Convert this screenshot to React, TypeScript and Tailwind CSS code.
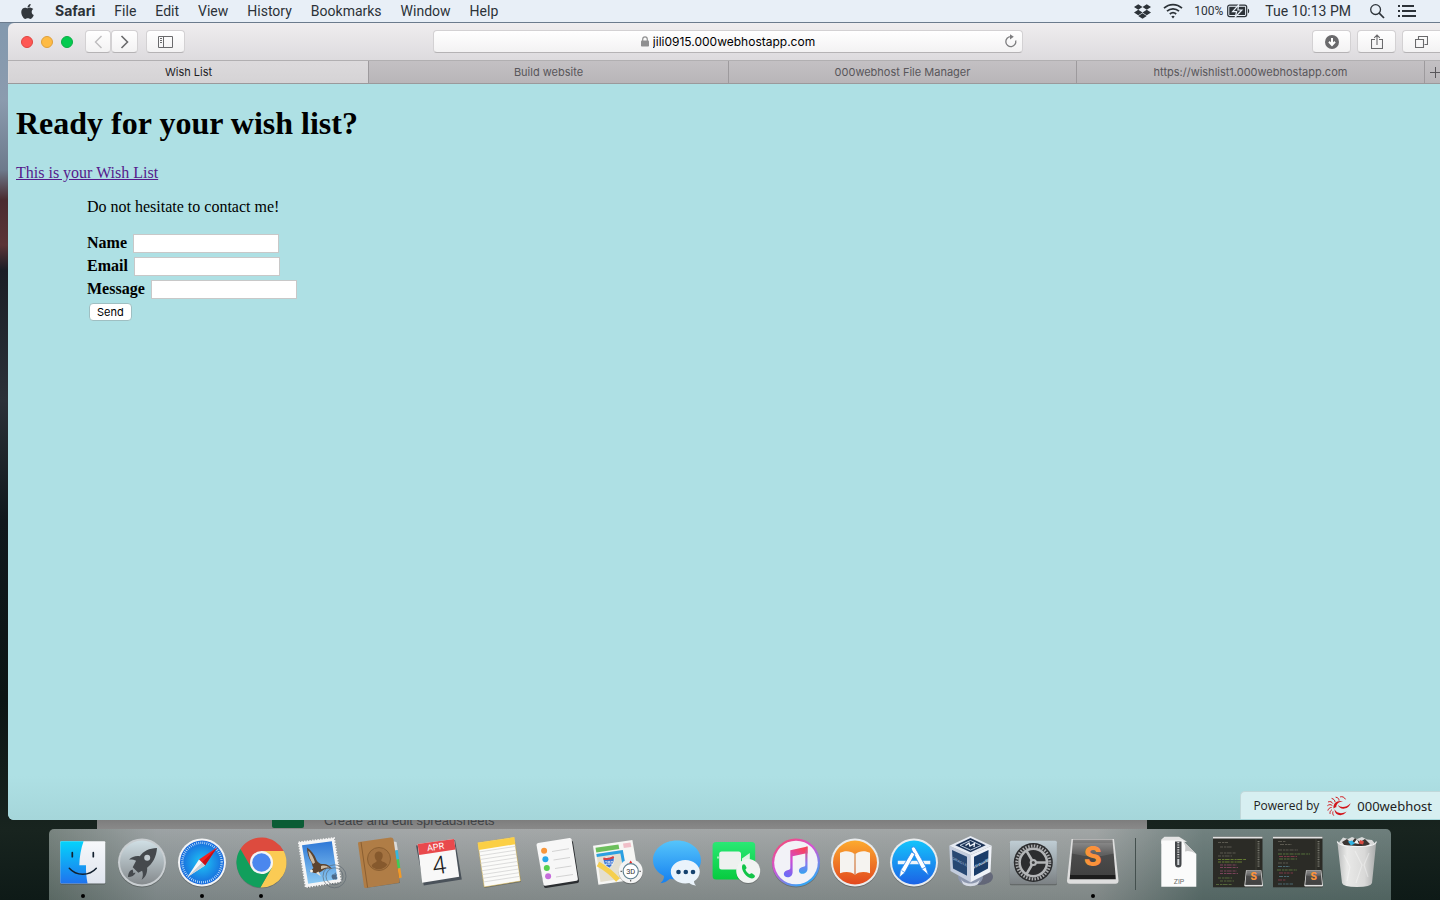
import type { ReactNode } from 'react';
import { FaApple, FaDropbox } from 'react-icons/fa';

const menus = ['File', 'Edit', 'View', 'History', 'Bookmarks', 'Window', 'Help'];

function MenuBar() {
  return (
    <header className="flex h-[23px] shrink-0 items-center justify-between border-b border-[#6b7b8d] bg-[#e8eff7] pr-[23px] pl-[19px] font-['Roboto',sans-serif] text-[14px] leading-[22px] text-[#2c3238]">
      <nav aria-label="Menu bar" className="flex items-center gap-[19px]">
        <button aria-label="Apple menu" className="text-[#33383d]">
          <FaApple size={17} />
        </button>
        <button className="font-['Inter',sans-serif] font-bold">Safari</button>
        {menus.map((m) => (
          <button key={m}>{m}</button>
        ))}
      </nav>
      <div className="flex items-center">
        <button aria-label="Dropbox"><FaDropbox size={17} /></button>
        <button aria-label="Wi-Fi" className="ml-3">
          <svg width="20" height="16" viewBox="0 0 20 16" fill="none" stroke="currentColor" strokeWidth="1.7">
            <path d="M1 5.2a13 13 0 0 1 18 0M4 8.2a8.8 8.8 0 0 1 12 0M6.8 11a4.8 4.8 0 0 1 6.4 0" />
            <path d="M10 15.4 8.3 13.5a2.4 2.4 0 0 1 3.4 0z" fill="currentColor" stroke="none" />
          </svg>
        </button>
        <button className="ml-[11px] flex items-center gap-1 text-[12px]">
          100%
          <svg width="23" height="14" viewBox="0 0 23 14" aria-hidden="true">
            <rect x=".7" y="1.2" width="19" height="11.4" rx="2" fill="none" stroke="currentColor" strokeWidth="1.2" />
            <rect x="2.3" y="2.8" width="15.8" height="8.2" fill="currentColor" />
            <path d="M21 4.7c1.6.5 1.6 4 0 4.500z" fill="currentColor" />
            <path d="M11.6 1 5.6 7.7h4L8.3 13l6.6-7h-4z" fill="currentColor" stroke="#e8eff7" strokeWidth="1.2" />
          </svg>
        </button>
        <button className="ml-[15px]">Tue 10:13 PM</button>
        <button aria-label="Spotlight" className="ml-[18px]">
          <svg width="16" height="16" viewBox="0 0 16 16" fill="none" stroke="currentColor" strokeWidth="1.3">
            <circle cx="6.6" cy="6.6" r="4.9" />
            <path d="m10.2 10.2 4.8 4.8" strokeWidth="1.7" />
          </svg>
        </button>
        <button aria-label="Notification Center" className="ml-[13px]">
          <svg width="19" height="12" viewBox="0 0 19 12" fill="currentColor">
            <path d="M0 0h2v2H0zM4 0h12v2H4zM0 5h2v2H0zM4 5h14v2H4zM0 10h2v2H0zM4 10h14v2H4z" />
          </svg>
        </button>
      </div>
    </header>
  );
}

function ToolButton({ label, children, className = '' }: { label: string; children: ReactNode; className?: string }) {
  return (
    <button
      aria-label={label}
      className={
        'flex h-[23px] shrink-0 items-center justify-center rounded-[4px] border border-b-[#b5b3b5] border-[#d3d1d3] bg-linear-to-b from-white to-[#f3f2f3] text-[#6a6a6c] ' +
        className
      }
    >
      {children}
    </button>
  );
}

function Toolbar() {
  return (
    <div className="grid h-[38px] grid-cols-[425fr_590fr_417fr] items-center border-b border-[#b1afb1] bg-linear-to-b from-[#efedef] to-[#dddbde] font-['Inter',sans-serif]">
      <div className="flex items-center pl-[13px]">
        <div className="flex gap-2">
          <button aria-label="Close" className="size-3 rounded-full border border-[#e0443f] bg-[#fe5754]" />
          <button aria-label="Minimize" className="size-3 rounded-full border border-[#dfa03a] bg-[#febb45]" />
          <button aria-label="Zoom" className="size-3 rounded-full border border-[#0bad45] bg-[#04cb50]" />
        </div>
        <ToolButton label="Back" className="ml-3 w-[26px]">
          <svg width="9" height="14" viewBox="0 0 9 14" fill="none" stroke="#bdbcbe" strokeWidth="1.4"><path d="M7.500 1 1.500 7l6 6" /></svg>
        </ToolButton>
        <ToolButton label="Forward" className="w-[27px]">
          <svg width="9" height="14" viewBox="0 0 9 14" fill="none" stroke="currentColor" strokeWidth="1.6"><path d="m1.500 1 6 6-6 6" /></svg>
        </ToolButton>
        <ToolButton label="Show sidebar" className="ml-2 w-[39px]">
          <svg width="15" height="12" viewBox="0 0 15 12" fill="none" stroke="currentColor"><path d="M.5.5h14v11H.5zM5.500 .5v11M2 2.500h2M2 4.500h2M2 6.500h2" /></svg>
        </ToolButton>
      </div>
      <div className="relative flex h-[23px] items-center justify-center gap-1 rounded-[4px] border border-[#d3d1d3] border-b-[#b5b3b5] bg-linear-to-b from-white to-[#f3f2f3]">
        <svg width="8" height="11" viewBox="0 0 8 11" aria-hidden="true">
          <rect y="4.500" width="8" height="6" rx=".8" fill="#8f8f90" />
          <path d="M1.700 5V3.200a2.300 2.300 0 0 1 4.600 0V5" fill="none" stroke="#8f8f90" strokeWidth="1.200" />
        </svg>
        <input
          aria-label="Address"
          defaultValue="jili0915.000webhostapp.com"
          className="[field-sizing:content] bg-transparent pt-px text-[12px] leading-[18px] text-black outline-none"
        />
        <button aria-label="Reload" className="absolute right-1 text-[#7c7c7e]">
          <svg width="14" height="15" viewBox="0 0 14 15" fill="none" stroke="currentColor" strokeWidth="1.300">
            <path d="M11.700 6.500a5 5 0 1 1-4.900-3.900" />
            <path d="M6 .2 9.800 2.700 6 5.400z" fill="currentColor" stroke="none" />
          </svg>
        </button>
      </div>
      <div className="flex justify-end gap-[6px] overflow-hidden">
        <ToolButton label="Downloads" className="w-[39px]">
          <svg width="14" height="14" viewBox="0 0 14 14"><circle cx="7" cy="7" r="7" fill="currentColor" /><path d="M7 3v6M4 6.800l3 3.200 3-3.200" fill="none" stroke="#fff" strokeWidth="2" /></svg>
        </ToolButton>
        <ToolButton label="Share" className="w-[39px]">
          <svg width="12" height="16" viewBox="0 0 12 16" fill="none" stroke="currentColor"><path d="M4 5.500H.5v9h11v-9H8M6 11V1.200M3.200 3.800 6 1l2.800 2.800" strokeWidth="1.100" /></svg>
        </ToolButton>
        <ToolButton label="Show all tabs" className="w-[38px] rounded-r-none border-r-0">
          <svg width="13" height="12" viewBox="0 0 13 12" fill="none" stroke="currentColor"><path d="M.5 3.500h8v8h-8zM3.500 3V.5h9v8H9.500" strokeWidth="1.100" /></svg>
        </ToolButton>
      </div>
    </div>
  );
}

function Tabs() {
  const idle = 'border-l border-[#9d9a9d] bg-linear-to-b from-[#c3c0c3] to-[#b8b5b8] text-[#58565a]';
  return (
    <div className="flex h-[23px] border-b border-[#9b999b] font-['Inter',sans-serif] text-[11px] leading-[22px]">
      <button className="flex-[30] border-l border-[#dcdadc] bg-linear-to-b from-[#dcdadc] to-[#d5d3d5] text-[#1d1d1f]">Wish List</button>
      <button className={'flex-[30] ' + idle}>Build website</button>
      <button className={'flex-[29] ' + idle}>000webhost File Manager</button>
      <button className={'flex-[29] ' + idle}>https://wishlist1.000webhostapp.com</button>
      <button aria-label="New tab" className={'flex w-4 items-center justify-end overflow-hidden ' + idle}>
        <svg width="10" height="11" viewBox="0 0 10 11" stroke="currentColor" className="shrink-0"><path d="M0 5.500h10M5.500 0v11" /></svg>
      </button>
    </div>
  );
}

function Field({ id, label }: { id: string; label: string }) {
  return (
    <div className="flex h-[23px] items-end gap-[6px] pb-px">
      <label htmlFor={id} className="leading-[21px] font-bold">{label}</label>
      <input id={id} name={id} className="h-[19px] w-[146px] border border-[#c8c8c8] bg-white px-1 text-[11px]" />
    </div>
  );
}

function Page() {
  return (
    <main className="relative flex-1 bg-[#aee0e4] bg-linear-to-b from-transparent from-94% to-[#a5d6da] px-2 pt-[21px] font-['Liberation_Serif',serif] text-[16px] leading-[18px] text-black">
      <h1 className="text-[32px] leading-[37px] font-bold">Ready for your wish list?</h1>
      <a href="#wishlist" className="mt-[22px] inline-block text-[#551a8b] underline">This is your Wish List</a>
      <form className="pl-[71px]" onSubmit={(e) => e.preventDefault()}>
        <p className="mt-[16px] mb-[15px]">Do not hesitate to contact me!</p>
        <Field id="name" label="Name" />
        <Field id="email" label="Email" />
        <Field id="message" label="Message" />
        <button className="mt-[3px] ml-[2px] h-[18px] rounded-[4px] border border-[#9fbfc2] bg-white px-[7px] font-['Inter',sans-serif] text-[11px] leading-[15px]">
          Send
        </button>
      </form>
      <a
        href="#host"
        className="absolute right-0 bottom-px flex h-[28px] items-center rounded-tl-[5px] border-t border-l border-[#c0d8da] bg-[#d7eff1] pr-2 pl-3 font-['Open_Sans',sans-serif] text-[12px] text-[#222]"
      >
        Powered by
        <svg width="24" height="20" viewBox="0 0 24 20" fill="#d2161b" className="mr-[6px] ml-2" aria-hidden="true">
          <path d="M6.500 12.500C6 7.500 9.500 4.200 16 5.300 11.500 5.800 9.300 8 9.300 11.300c-.6 0-1.700.4-2.800 1.200z" />
          <path d="M10.800 8.800c3 3.400 8.200 3 12.700-1.600-1.500 6-10.500 7.800-12.700 1.600z" />
          <path d="M7.600 13.300c2 4.200 7 5 12 2.300-3.800 5.700-12.200 4.200-12-2.300z" />
          <g fill="none" stroke="#d2161b" strokeWidth="1" strokeLinecap="round">
            <path d="M13.500.8c1.800-.5 3.800.2 4.800 2.200M9 1.200c2.200.4 3 1.600 3 3M5 2.500c2 .6 2.800 1.700 3 3.300M1.500 5.800c2-.6 3.300 0 4.200 1.500M.7 9.500c1.500-1.200 3-1.200 4.300-.2M1 14.200c.5-1.700 1.700-2.600 3.200-2.700M3 17.500c-.2-1.500.3-2.600 1.500-3.500M6.500 19.300c-.8-1-1-2.200-.6-3.500" />
          </g>
        </svg>
        <span className="font-['Noto_Sans',sans-serif] text-[13px]">000webhost</span>
      </a>
    </main>
  );
}

function Disc({ fill, rim = '#e9ecee' }: { fill: string; rim?: string }) {
  return (
    <>
      <circle cx="30" cy="30.500" r="24" fill="#000" opacity=".22" />
      <circle cx="30" cy="29.500" r="24" fill={rim} />
      <circle cx="30" cy="29.500" r="22" fill={fill} />
    </>
  );
}

const finder = (
  <>
    <defs>
      <linearGradient id="fb" x2="0" y2="1"><stop stopColor="#05d3fb" /><stop offset="1" stopColor="#1f73ee" /></linearGradient>
      <linearGradient id="fw" x2="0" y2="1"><stop stopColor="#f6f8fb" /><stop offset="1" stopColor="#dfe4ee" /></linearGradient>
    </defs>
    <rect x="7.300" y="9" width="45" height="42.500" rx="1" fill="#000" opacity=".25" />
    <rect x="7.300" y="8.300" width="45" height="42.200" rx="1" fill="url(#fw)" />
    <path d="M8.300 8.300H30.600C28 15 26.500 24 26.300 32.300h6.700c-.2 6 .4 12.500 1.600 18.200H8.300a1 1 0 0 1-1-1V9.300a1 1 0 0 1 1-1z" fill="url(#fb)" />
    <path d="M19.300 19.700v4M40.300 19.700v4" stroke="#12202f" strokeWidth="1.700" strokeLinecap="round" />
    <path d="M16.300 35.300c7 8 20 8 27 0" fill="none" stroke="#12202f" strokeWidth="1.500" strokeLinecap="round" />
  </>
);

const launchpad = (
  <>
    <defs><linearGradient id="lp" x2="0" y2="1"><stop stopColor="#d0dfe5" /><stop offset="1" stopColor="#858a8d" /></linearGradient></defs>
    <Disc fill="url(#lp)" rim="#c9ced1" />
    <path d="M45 15c-8 .3-13.500 3-17.200 8.300-4-.7-8 .6-10.700 3.300 2.200-.2 4.800 0 7 1.200l-3.400 6.400 5.600 5.600 3.800-2c1.200 3 1 6-.5 9 4-2.600 6-7 5.500-12C40.500 30.500 44.500 24 45 15z" fill="#45494d" />
    <circle cx="35.200" cy="24.700" r="3" fill="#c3ccd1" />
    <path d="M20.500 36.500c-3 .8-4.300 4-4.500 7.500 3 .2 6.500-1.400 7.600-4.300-.8 0-1.600 0-2.400.6.200-1.200 0-2.600-.7-3.800z" fill="#45494d" />
  </>
);

const safari = (
  <>
    <defs><radialGradient id="sf"><stop stopColor="#1fc8f6" /><stop offset="1" stopColor="#1768dc" /></radialGradient></defs>
    <Disc fill="url(#sf)" rim="#f3f4f5" />
    <circle cx="30" cy="29.500" r="19.700" fill="none" stroke="#d6efff" strokeWidth="2.400" strokeDasharray=".7 1.360" />
    <path d="M45 14.500 33 32.500 27 26.500z" fill="#f01f1f" />
    <path d="M45 14.500 33 32.500 30 29.500z" fill="#c51018" />
    <path d="M15.500 44 27 26.500 33 32.500z" fill="#f7f7f7" />
    <path d="M15.500 44 30 29.500 33 32.500z" fill="#cbd0d6" />
  </>
);

const chrome = (
  <>
    <circle cx="30.500" cy="30.300" r="25" fill="#000" opacity=".2" />
    <g transform="translate(.5)">
      <path d="M30 18H52.200A25 25 0 0 0 8.900 16L20 35.250z" fill="#dd4b3e" />
      <path d="M30 18H52.200A25 25 0 0 1 28.900 54.500L40 35.250z" fill="#fbcb54" />
      <path d="M40 35.250 28.900 54.500A25 25 0 0 1 8.900 16L20 35.250z" fill="#119f5c" />
      <circle cx="30" cy="29.500" r="11.500" fill="#f5f5f5" />
      <circle cx="30" cy="29.500" r="9.300" fill="#4b87ee" />
    </g>
  </>
);

const mail = (
  <>
    <defs><linearGradient id="ml" x2="0" y2="1"><stop stopColor="#2f78d6" /><stop offset="1" stopColor="#8ccaf3" /></linearGradient></defs>
    <path d="M9.500 10.500 44.500 6l7 43.500L16 55z" fill="#000" opacity=".25" />
    <path d="M8.700 9.300 44 5l7 43.700-35.300 5.600z" fill="#f5f5f5" stroke="#f5f5f5" strokeWidth="1.800" strokeDasharray="1.400 1.300" />
    <path d="M12 12.200 41.800 8.300l5.700 37.900-29.300 4.500z" fill="url(#ml)" />
    <path d="M17 14.500c4 2.500 7.500 7 9.500 12.500 1.500 2.500 3 3.800 5.500 4 4-.5 7.500.8 10 5-3.500-.8-6-.5-8.500 1-3 2.500-6 3.500-9 3l-5-1.500 4-3.500c-1-1.500-1.500-3.500-1.800-5.500-3-4-4.700-9.500-4.700-15z" fill="#5c432e" />
    <path d="M18.300 17.500c3 3 5.700 7.500 6.700 12l-2 1.500c-2.700-4-4.300-8.500-4.700-13.500zM31 33c3.500-1 6-.3 8.500 2-3.500-.8-5.500 0-8.500 1.200z" fill="#cdbba3" />
    <path d="m26 40 5 3.500-2.500-5z" fill="#e9e0d2" />
    <circle cx="21.500" cy="38" r="1.500" fill="#f4efe6" />
    <g fill="none" stroke="#5e6870" strokeWidth=".9" opacity=".7"><circle cx="44.500" cy="43.300" r="11.500" /><circle cx="44.500" cy="43.300" r="8.500" /></g>
    <FaApple x="40.500" y="39" size="8" color="#4d6b8a" />
  </>
);

const contacts = (
  <>
    <path d="M41 8l5.500 1 1.300 8-4 1z" fill="#dadada" />
    <path d="M43 18l4.700-1 1.400 9-4 1z" fill="#35b8dd" />
    <path d="M45 27l4-1 1.300 9-4 1z" fill="#40cc54" />
    <path d="M46 36l4.300-1 1.500 9.500-3.800 1z" fill="#f29a28" />
    <path d="M9 10.500 42 6l8 44-34.500 5z" fill="#000" opacity=".25" />
    <path d="M8 10.500q-.2-1.200 1-1.400L40.500 4.500q2.500-.2 3 2l6 41.500q.2 1.800-1.500 2L15.500 55q-1.200 0-1.500-1.200z" fill="#b07d46" />
    <path d="m11 9 6.600 45.500" stroke="#8b5f31" strokeWidth="1" />
    <circle cx="29" cy="26" r="11.500" fill="#a47341" stroke="#8b5f31" />
    <path d="M29 18.500c2.800 0 4 2.200 3.700 4.800-.2 1.800-1 3-1.500 3.700 0 2 5 2 6 4.800a10 10 0 0 1-15.500 1.500c.5-3.500 5-3 5-5.700-1-.8-1.800-2.300-2-4.200-.2-2.700 1.300-4.900 4.300-4.900z" fill="#86592d" />
  </>
);

const calendar = (
  <>
    <path d="M7 12.500 46 7l6.800 39.500-38 6z" fill="#4a525a" />
    <path d="M8.600 11 45 6l5.200 37.700-37 6z" fill="#f8f8f8" />
    <path d="M8.600 11 45 6l1.500 10.500L10.200 22z" fill="#e9494c" />
    <g transform="rotate(-8 28 28)" textAnchor="middle" fontFamily="Roboto, sans-serif">
      <text x="28.500" y="17" fontSize="9" fill="#fff">APR</text>
      <text x="29.500" y="41" fontSize="25" fontWeight="300" fill="#1d1d1d">4</text>
    </g>
  </>
);

const notes = (
  <>
    <path d="M10 11 45.500 5.500l6.500 43.500L15.500 55z" fill="#000" opacity=".25" />
    <path d="M8.800 9.700 45.200 4.300 51.500 48l-36.300 6z" fill="#fbfbf9" stroke="#d8b13c" strokeWidth=".5" />
    <path d="M8.800 9.700 45.200 4.300l1 7-36.400 5.600z" fill="#fbcf45" />
    <path d="m10 19 36.500-5.600m-36 9.400L47 17.200m-36 9.300L47.500 21M11.500 30.300 48 24.700M12 34l36.500-5.500M12.600 37.800 49 32.300m-35.800 9.300L49.600 36m-35.800 9.300 36.300-5.600m-35.800 9.300 36.200-5.600" stroke="#cfcfcf" strokeWidth=".7" />
  </>
);

const reminders = (
  <>
    <path d="M9.500 13 43 7.500q1.500 0 2 1.500l6 39q.2 1.500-1.300 1.900L18 55q-1.700 0-2-1.500z" fill="#2b2e31" />
    <path d="M8.500 12q-.2-1.800 1.600-2.100L41.500 5q1.800-.2 2.100 1.600l6.300 39.300q.2 1.500-1.400 1.900L17.500 52.800q-1.700.2-2.100-1.500z" fill="#f7f7f7" />
    <circle cx="16.100" cy="17.700" r="3" fill="#f8963a" />
    <circle cx="17.400" cy="26.300" r="3" fill="#27a7ea" />
    <circle cx="18.800" cy="35" r="3" fill="#55d050" />
    <circle cx="20.100" cy="43.300" r="3" fill="#c66ddb" />
    <path d="m24 18.500 17-2.800M25.500 27 42 24.500m-15 11L43.500 33M28 44l17-2.500" stroke="#c9c9c9" strokeWidth=".8" />
  </>
);

const maps = (
  <>
    <path d="M6 12.700 45.400 7l6.600 39-40.600 5.700z" fill="#f6f6f4" />
    <path d="m8.500 14.800 23-3.300.8 4.500-23 3.500z" fill="#6cbf5c" />
    <path d="m36 10.500 7.500-1 .8 4.500-7.500 1z" fill="#f0bfc8" />
    <path d="m9.500 21 26-4 2 15 10 2 1 9.500-35 5.500z" fill="#e4dfd0" />
    <path d="m9.600 22.500 25-3.800 4.400 24" fill="none" stroke="#2ba0e2" strokeWidth="3" />
    <path d="M11 31c5 3 10 5 20 16" fill="none" stroke="#f6cf4f" strokeWidth="5" />
    <path d="M16.500 24.500q5 1.500 10-1.500 2.500 6-4 12-7.500-3.500-6-10.500z" fill="#3a72cf" stroke="#fff" strokeWidth=".6" />
    <path d="M16.300 25.500q5 1.500 10.500-1.500" fill="none" stroke="#da4144" strokeWidth="2" />
    <text x="22" y="32" fontSize="5" fill="#fff" textAnchor="middle" fontFamily="Roboto, sans-serif">280</text>
    <circle cx="43.700" cy="39.300" r="12" fill="#000" opacity=".25" />
    <circle cx="43.700" cy="38.300" r="12" fill="#f4f4f4" />
    <circle cx="43.700" cy="38.300" r="7.600" fill="#fff" stroke="#5f8090" strokeWidth="1.200" />
    <path d="m43.700 27.500 1.500 2.600h-3z" fill="#e42a2a" />
    <path d="M33.500 38.300h1.500M52.400 38.300h1.500M43.700 47v1.500" stroke="#444" />
    <text x="43.700" y="41" fontSize="7.500" fill="#333" textAnchor="middle" fontFamily="Roboto, sans-serif">3D</text>
  </>
);

const messages = (
  <>
    <defs><linearGradient id="ms" x2="0" y2="1"><stop stopColor="#56c5fb" /><stop offset="1" stopColor="#1580f0" /></linearGradient></defs>
    <path d="M30 7.500c13.300 0 24 8.700 24 19.500S43.300 46.500 30 46.500q-3.500 0-7-.8-4.500 4-9.500 4.500 3.500-3 3.500-7.200C10 39.500 6 33.800 6 27 6 16.200 16.700 7.500 30 7.500z" fill="url(#ms)" />
    <path d="M38.300 27c8 0 14.500 5.200 14.500 11.700 0 4-2.300 7.300-5.800 9.500 0 2 .8 3.200 2.300 4.300-3 0-5.300-1-7-2.400q-2 .4-4 .4c-8 0-14.500-5.300-14.500-11.800S30.300 27 38.300 27z" fill="#eaf3fb" />
    <g fill="#15426f"><circle cx="31.500" cy="39" r="2.300" /><circle cx="38.800" cy="39" r="2.300" /><circle cx="46" cy="39" r="2.300" /></g>
  </>
);

const facetime = (
  <>
    <defs><linearGradient id="ft" x2="0" y2="1"><stop stopColor="#2ae874" /><stop offset="1" stopColor="#07cb3f" /></linearGradient></defs>
    <rect x="6.600" y="9" width="42.600" height="37.500" rx="3.500" fill="url(#ft)" />
    <rect x="13.200" y="18.500" width="21.800" height="18" rx="2.500" fill="#eef1ef" />
    <path d="m36 25.500 7.800-5.500v14L36 29.500z" fill="#dff3e4" />
    <path d="M12 23.500v2" stroke="#fff" strokeWidth="1.200" />
    <circle cx="42.200" cy="39" r="12" fill="#000" opacity=".2" />
    <circle cx="42.200" cy="38" r="12" fill="#f1f4f2" />
    <path d="M36.500 31.800c1.200-1 2-.8 2.700.3l1.200 2.200c.5 1-.3 1.700-1 2.300.7 2 2.400 3.900 4.400 4.700.8-.7 1.600-1.300 2.500-.7l2 1.500c1 .8.8 1.800-.2 2.600-4.700 3.500-14.500-7-11.600-12.900z" fill="#12c548" />
  </>
);

const itunes = (
  <>
    <defs>
      <linearGradient id="it" x2=".6" y2="1"><stop stopColor="#fb4a60" /><stop offset=".5" stopColor="#d554d6" /><stop offset="1" stopColor="#35a6f5" /></linearGradient>
      <linearGradient id="nt" x1=".7" x2=".2" y2="1"><stop stopColor="#fb4158" /><stop offset=".5" stopColor="#d04ad2" /><stop offset="1" stopColor="#6a6bf7" /></linearGradient>
      <linearGradient id="ns" x2="0" y2="1"><stop stopColor="#fb4158" /><stop offset=".6" stopColor="#8a78f0" /><stop offset="1" stopColor="#36a3f0" /></linearGradient>
    </defs>
    <circle cx="30" cy="30.500" r="24" fill="#000" opacity=".2" />
    <circle cx="30" cy="29.500" r="24" fill="url(#it)" />
    <circle cx="30" cy="29.500" r="21.800" fill="#f2f2f7" />
    <path d="M24.300 17.200 41.500 13.500V20.500H39.300l-12.700 2.700v16c0 3-2.300 5-5 5-2.200 0-3.800-1.200-3.800-3.200 0-2.500 2.300-3.600 4.400-4 1.400-.2 2.100-.6 2.100-1.900z" fill="url(#nt)" />
    <path d="M41.500 13.500V36c0 3-2.500 4.800-5 4.800-2 0-3.600-1.200-3.600-3.100 0-2.500 2.300-3.600 4.400-3.900 1.400-.2 2-.6 2-1.800V14z" fill="url(#ns)" />
  </>
);

const ibooks = (
  <>
    <defs><linearGradient id="ib" x2="0" y2="1"><stop stopColor="#fcaa2f" /><stop offset="1" stopColor="#e2481e" /></linearGradient></defs>
    <Disc fill="url(#ib)" />
    <path d="M29.300 21c-3-3.300-9.800-3.600-14.300-1.200v20.400c5-2 11-1.700 14.300 1zM30.700 21c3-3.300 9.800-3.600 14.300-1.200v20.400c-5-2-11-1.700-14.300 1z" fill="#f5f3f0" />
    <path d="M30 20.500V42" stroke="#c9c3bd" strokeWidth=".8" />
  </>
);

const appstore = (
  <>
    <defs><linearGradient id="as" x2="0" y2="1"><stop stopColor="#14c4fb" /><stop offset="1" stopColor="#1c62e6" /></linearGradient></defs>
    <Disc fill="url(#as)" />
    <path d="M13.800 27.700h32.500v3.600H13.800z" fill="#eef4fa" />
    <path d="M28.200 14.200q1.800-1 3 .6L41.500 33l3 9-6.500-5.500L27.700 17q-.9-1.800.5-2.800z" fill="#fff" stroke="#2a84ec" strokeWidth=".8" />
    <path d="m27.500 19 3.500 2-10.500 19-5 4.300.8-6.500z" fill="#fff" stroke="#2a84ec" strokeWidth=".8" />
    <path d="m17.500 37.500 3.300 2M38 36l3.500-2" stroke="#2a84ec" strokeWidth=".8" />
  </>
);

const virtualbox = (
  <>
    <ellipse cx="35" cy="44" rx="14" ry="8" fill="#1c1d4f" opacity=".35" />
    <path d="M14 43c0 13 25 13 25 0z" fill="#8c96ad" />
    <path d="M17 46c3 6 16 6 19 0l-2 5c-4 3-11 3-15 0z" fill="#d6dbe6" />
    <path d="M5.300 12.700 26.500 22v27.200L6.500 38z" fill="#c3ccdd" />
    <path d="M47.700 12.700 26.500 22v27.200L46.500 39z" fill="#eff2f8" />
    <path d="m26.500 3 21.200 9.700L26.500 22 5.300 12.700z" fill="#e6ebf3" />
    <path d="m26.500 5 15.200 7.300-15.200 7-15.200-7z" fill="#1d3457" />
    <path d="m26.500 7.500 10.500 5-10.500 4.600L16 12.300z" fill="none" stroke="#cfdcee" strokeWidth=".9" />
    <path d="m21.500 12.500 3.500-2.500 1 3 4.500-2.500-.5 3.500" fill="none" stroke="#eef3fa" strokeWidth="1.300" />
    <path d="m8 17 15 6.700v19L9 35.500z" fill="#274873" />
    <path d="M30 23.700 44.500 17 44 35.500 30 43z" fill="#1b3d69" />
    <g fontFamily="Liberation Sans, sans-serif" fontWeight="700" textAnchor="middle">
      <text transform="matrix(1 .5 0 1 15.700 30)" fontSize="3.600" fill="#8ba6c6">ORACLE</text>
      <text transform="matrix(1 -.5 0 1 37 32)" fontSize="4.200" fill="#d7e4f2">VirtualB</text>
    </g>
  </>
);

const settings = (
  <>
    <defs><linearGradient id="st" x2="0" y2="1"><stop stopColor="#bfcdd4" /><stop offset="1" stopColor="#7c8184" /></linearGradient></defs>
    <rect x="6.900" y="8.700" width="47" height="43.500" rx="1.500" fill="#000" opacity=".3" />
    <rect x="6.900" y="7.700" width="47" height="43.500" rx="1.500" fill="url(#st)" />
    <circle cx="30.300" cy="29.500" r="19.500" fill="#2c2d2f" />
    <circle cx="30.300" cy="29.500" r="16.500" fill="none" stroke="#a9abad" strokeWidth="3" strokeDasharray="1.500 1.380" />
    <circle cx="30.300" cy="29.500" r="13.700" fill="none" stroke="#b3b5b7" strokeWidth="2.600" />
    <path d="M30.300 29.500h13.500M30.300 29.500 23.500 17.800M30.300 29.500l-6.800 11.700" stroke="#b3b5b7" strokeWidth="2.600" />
    <circle cx="30.300" cy="29.500" r="3.600" fill="#b3b5b7" />
    <circle cx="30.300" cy="29.500" r="1.500" fill="#3a3b3c" />
  </>
);

const sublimeBody = (
  <>
    <path d="M8.500 6h42.500l4.500 41.500q0 3.300-3 3.300H7q-3 0-3-3.300z" fill="#dedede" />
    <path d="M10 6.500h39.500L52.500 42H7z" fill="url(#sb)" />
    <path d="M7 42h45.500l.3 4.200H6.700z" fill="#1c1c1c" />
    <path d="M9.700 10 50 10l1 10.500q-20 5.500-42.300 0z" fill="#fff" opacity=".12" />
    <text x="29.700" y="33" fontSize="27" fontWeight="800" fill="#fb923a" textAnchor="middle" fontFamily="Inter, sans-serif">S</text>
  </>
);

const sublime = (
  <>
    <defs><linearGradient id="sb" x2="0" y2="1"><stop stopColor="#858585" /><stop offset=".4" stopColor="#4c4c4c" /><stop offset="1" stopColor="#414141" /></linearGradient></defs>
    {sublimeBody}
  </>
);

const zip = (
  <>
    <path d="M12.300 6.500 15.500 3.700H30l8 5-25.700 2z" fill="#e4e4e4" />
    <path d="M12.300 7.500h21.200L47.300 21v32.700h-35z" fill="#fbfbfb" />
    <path d="M33 7.500 47.300 21q-6-4-11.300-2.500Q37.500 12 33 7.500z" fill="#c9c9c9" />
    <path d="M26 8.500h6.500V31q0 3.500-3.200 3.500T26 31z" fill="#44474a" />
    <path d="M29.300 9v16" stroke="#d6d6d6" strokeWidth="2" strokeDasharray="1.200 1.200" />
    <path d="M28.300 26h2v6h-2z" fill="#d0d3d6" />
    <text x="30" y="51" fontSize="7" fill="#6b6b6b" textAnchor="middle" fontFamily="Roboto, sans-serif">ZIP</text>
  </>
);

function CodeWindow({ lines }: { lines: ReactNode }) {
  return (
    <>
      <rect x="5" y="3.700" width="49.500" height="50.600" fill="#2b2b26" />
      <rect x="5" y="3.700" width="49.500" height="1.800" fill="#e2e2e2" />
      <path d="M48 6v48" stroke="#4a4a42" strokeWidth=".6" />
      <path d="M50.500 8v26" stroke="#77776c" strokeWidth="2" strokeDasharray="1 .8" />
      {lines}
      <svg x="36" y="36" width="19.500" height="18.500" viewBox="3 4 54 48">{sublimeBody}</svg>
    </>
  );
}

const codeA = (
  <CodeWindow
    lines={
      <g fill="none" strokeWidth=".8" strokeDasharray="3 1 2 .6 5 1" opacity=".8">
        <path d="M10 9.500h10M12 14h12M12 20h16M10 23h14" stroke="#77756a" />
        <path d="M10 26.500h28M10 29h24" stroke="#87a83a" />
        <path d="M12 32h17M12 34.500h18M12 38h17M12 40.500h18" stroke="#a8527a" />
        <path d="M10 45h14M12 48h14M8 51.500h16" stroke="#6f8a4a" />
      </g>
    }
  />
);

const codeB = (
  <CodeWindow
    lines={
      <g fill="none" strokeWidth=".8" strokeDasharray="4 1 2 .6 3 1" opacity=".8">
        <path d="M10 8.500h8M12 11.500h12M10 17h20M10 30h10" stroke="#77756a" />
        <path d="M10 21h32M11 26h18M9 37h20" stroke="#6f9a4a" />
        <path d="M11 23.500h18M11 40h14M10 47h8" stroke="#a8425a" />
        <path d="M10 33.500h12M11 43.500h10M10 51h15" stroke="#5f8ea0" />
      </g>
    }
  />
);

const trash = (
  <>
    <defs><linearGradient id="tr"><stop stopColor="#b9bbbb" /><stop offset=".25" stopColor="#e9e9e8" /><stop offset=".7" stopColor="#d9d9d8" /><stop offset="1" stopColor="#a9abab" /></linearGradient></defs>
    <path d="M12 9.500 16 4.500l5 1.500 4-2 5 2 5-2 5 2.500 5 .5 3 3.500-9 4H18z" fill="#d8d9d9" />
    <path d="m15 9 5-3 4 4 4-5 5 4 5-3 5 5-6 3-18 1z" fill="#3b3532" />
    <path d="m21 8.500 4-1 3 3-4 2z" fill="#31b4e3" />
    <path d="m33 7 4 1.500-1 3-4-1z" fill="#d8483f" />
    <path d="m27 10 3-4 2 5z" fill="#f3f3f3" />
    <path d="M10.300 8.500q1.500 5 20 5t19-5L45 50q-1 4-15 4t-15-4z" fill="url(#tr)" />
    <path d="M10.300 8.500q1.500 5 20 5t19-5" fill="none" stroke="#f5f5f5" strokeWidth="1.200" />
    <path d="m17 22 6 12-3 14M28 18l7 14-6 18M42 20l-5 12 4 12" fill="none" stroke="#fff" strokeWidth="1.200" opacity=".35" />
  </>
);

type DockApp = { name: string; art: ReactNode; running?: boolean };

const apps: DockApp[] = [
  { name: 'Finder', art: finder, running: true },
  { name: 'Launchpad', art: launchpad },
  { name: 'Safari browser', art: safari, running: true },
  { name: 'Chrome', art: chrome, running: true },
  { name: 'Mail', art: mail },
  { name: 'Contacts', art: contacts },
  { name: 'Calendar', art: calendar },
  { name: 'Notes', art: notes },
  { name: 'Reminders', art: reminders },
  { name: 'Maps', art: maps },
  { name: 'Messages', art: messages },
  { name: 'FaceTime', art: facetime },
  { name: 'iTunes', art: itunes },
  { name: 'iBooks', art: ibooks },
  { name: 'App Store', art: appstore },
  { name: 'VirtualBox', art: virtualbox },
  { name: 'System Preferences', art: settings },
  { name: 'Sublime Text', art: sublime, running: true },
];

const shelf: DockApp[] = [
  { name: 'Archive', art: zip },
  { name: 'Editor window 1', art: codeA },
  { name: 'Editor window 2', art: codeB },
  { name: 'Trash', art: trash },
];

function DockIcon({ app }: { app: DockApp }) {
  return (
    <button aria-label={app.name} className="flex min-w-0 flex-1 flex-col items-center">
      <svg viewBox="0 0 60 60" className="size-[60px] shrink-0">{app.art}</svg>
      {app.running && <span className="mt-px size-1 rounded-full bg-black" />}
    </button>
  );
}

function Dock() {
  return (
    <footer className="relative shrink-0 px-[49px] pt-[9px]">
      <div className="absolute inset-y-0 right-[293px] left-[97px] bg-linear-to-b from-[#7d7d7d] to-[#939393] to-20%">
        <div className="flex items-start gap-5 pl-[175px] font-['Liberation_Sans',sans-serif] text-[13px] leading-[14px] text-[#3f4245]">
          <span className="h-2 w-8 rounded-b-[2px] bg-[#0b5c35]" />
          <span className="-mt-[6px]">Create and edit spreadsheets</span>
        </div>
      </div>
      <div className="relative flex h-[71px] items-start rounded-t-[5px] bg-[linear-gradient(to_bottom,rgba(255,255,255,0.12),rgba(40,60,55,0.2)),linear-gradient(to_right,#66736e,#8f9698_8%,#989c9d_30%,#949999_78%,#5e706e_86%,#5a6d6a)] px-1 pt-1">
        {apps.map((a) => <DockIcon key={a.name} app={a} />)}
        <div className="flex h-[62px] w-[27px] shrink-0 items-center justify-center">
          <span className="h-[52px] w-px bg-[#44504e]" />
        </div>
        {shelf.map((a) => <DockIcon key={a.name} app={a} />)}
      </div>
    </footer>
  );
}

export default function App() {
  return (
    <div className="flex h-screen flex-col overflow-hidden bg-[#0c1716] bg-[linear-gradient(to_bottom,#8098ae_0,#8b9bae_100px,#6d7a8c_170px,#4a2c30_200px,#5b3436_245px,#1a1e26_270px,#2b3138_400px,#10181c_520px,#0b1514_700px,#18241f_830px,#0e1a17_900px)]">
      <MenuBar />
      <div className="relative z-10 ml-2 flex min-h-0 flex-1 flex-col overflow-hidden rounded-l-[6px]">
        <Toolbar />
        <Tabs />
        <Page />
      </div>
      <Dock />
    </div>
  );
}
